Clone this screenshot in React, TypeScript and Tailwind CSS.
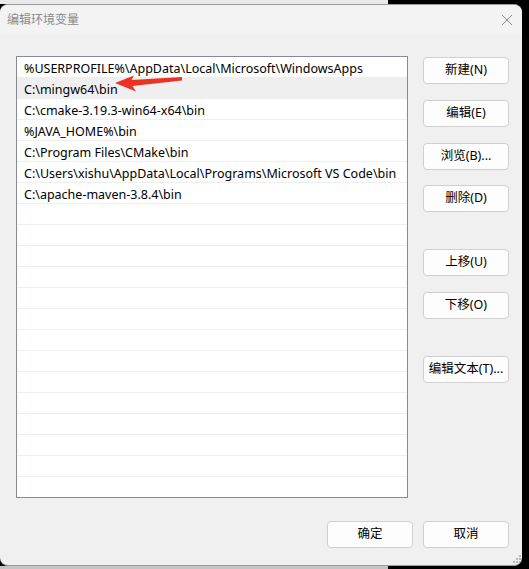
import React from 'react';

const paths = [
  '%USERPROFILE%\\AppData\\Local\\Microsoft\\WindowsApps',
  'C:\\mingw64\\bin',
  'C:\\cmake-3.19.3-win64-x64\\bin',
  '%JAVA_HOME%\\bin',
  'C:\\Program Files\\CMake\\bin',
  'C:\\Users\\xishu\\AppData\\Local\\Programs\\Microsoft VS Code\\bin',
  'C:\\apache-maven-3.8.4\\bin',
];

const rows = Array.from({ length: 21 }, (_, i) => paths[i] ?? '');

const font = { fontFamily: '"Noto Sans", "Noto Sans CJK SC", sans-serif' };

function Btn({ label, className = '' }: { label: string; className?: string }) {
  return (
    <button
      className={`w-[86px] h-[27px] shrink-0 rounded-[4px] border border-[#d0d0d0] bg-[#fdfdfd] text-[12.5px] text-black flex items-center justify-center ${className}`}
    >
      {label}
    </button>
  );
}

export default function App() {
  return (
    <div className="w-[529px] h-[569px] bg-black flex flex-col overflow-hidden relative" style={font}>
      <div className="h-[4px] w-[388px] bg-[#e9e9e9] shrink-0" />
      <div className="w-[522px] h-[562px] shrink-0 rounded-[8px] border-t border-b border-[#9c9c9c] bg-[#f0f0f0] flex flex-col overflow-hidden relative">
        {/* title bar */}
        <div className="h-[30px] bg-[#f3f3f3] flex items-center justify-between pl-[7px] pr-[8px] shrink-0">
          <span className="text-[12px] text-[#8b8b8b]">编辑环境变量</span>
          <svg width="12" height="12" viewBox="0 0 12 12" className="mr-[1px]">
            <path d="M1 1 L11 11 M11 1 L1 11" stroke="#8a8a8a" strokeWidth="1" />
          </svg>
        </div>

        {/* body */}
        <div className="flex-1 flex flex-col">
          <div className="flex pl-[16px] pt-[21px]">
            <div className="w-[392px] h-[442px] border border-[#868a91] bg-white overflow-hidden">
              {rows.map((p, i) => (
                <div
                  key={i}
                  className={`h-[21px] border-b border-[#eeeeee] pl-[7px] text-[12.5px] leading-[23px] text-black whitespace-nowrap ${
                    i === 1 ? 'bg-[#efefef]' : ''
                  }`}
                >
                  {p}
                </div>
              ))}
            </div>

            <div className="flex flex-col ml-[15px] pt-[1px]">
              <Btn label="新建(N)" />
              <Btn label="编辑(E)" className="mt-[16px]" />
              <Btn label="浏览(B)..." className="mt-[16px]" />
              <Btn label="删除(D)" className="mt-[15px]" />
              <Btn label="上移(U)" className="mt-[37px]" />
              <Btn label="下移(O)" className="mt-[16px]" />
              <Btn label="编辑文本(T)..." className="mt-[37px]" />
            </div>
          </div>

          <div className="flex justify-end gap-[10px] pr-[13px] mt-[23px]">
            <Btn label="确定" className="w-[85px]" />
            <Btn label="取消" className="w-[85px]" />
          </div>
        </div>

        {/* resize grip */}
        <svg width="10" height="10" viewBox="0 0 10 10" className="absolute right-[1px] bottom-[1px]">
          {[
            [8, 0], [8, 3], [5, 3], [8, 6], [5, 6], [2, 6],
          ].map(([x, y], i) => (
            <rect key={i} x={x} y={y + 1} width="2" height="2" fill="#b8b8b8" />
          ))}
        </svg>
      </div>
      <div className="h-[3px] w-[388px] bg-[#c4c4c4] shrink-0" />

      {/* red arrow annotation */}
      <svg width="529" height="569" className="absolute left-0 top-0 pointer-events-none">
        <polygon
          points="115,83 134,75.5 131.5,80 182,77 182,80.5 132.5,86 136,91.5"
          fill="#ea3323"
        />
      </svg>
    </div>
  );
}
